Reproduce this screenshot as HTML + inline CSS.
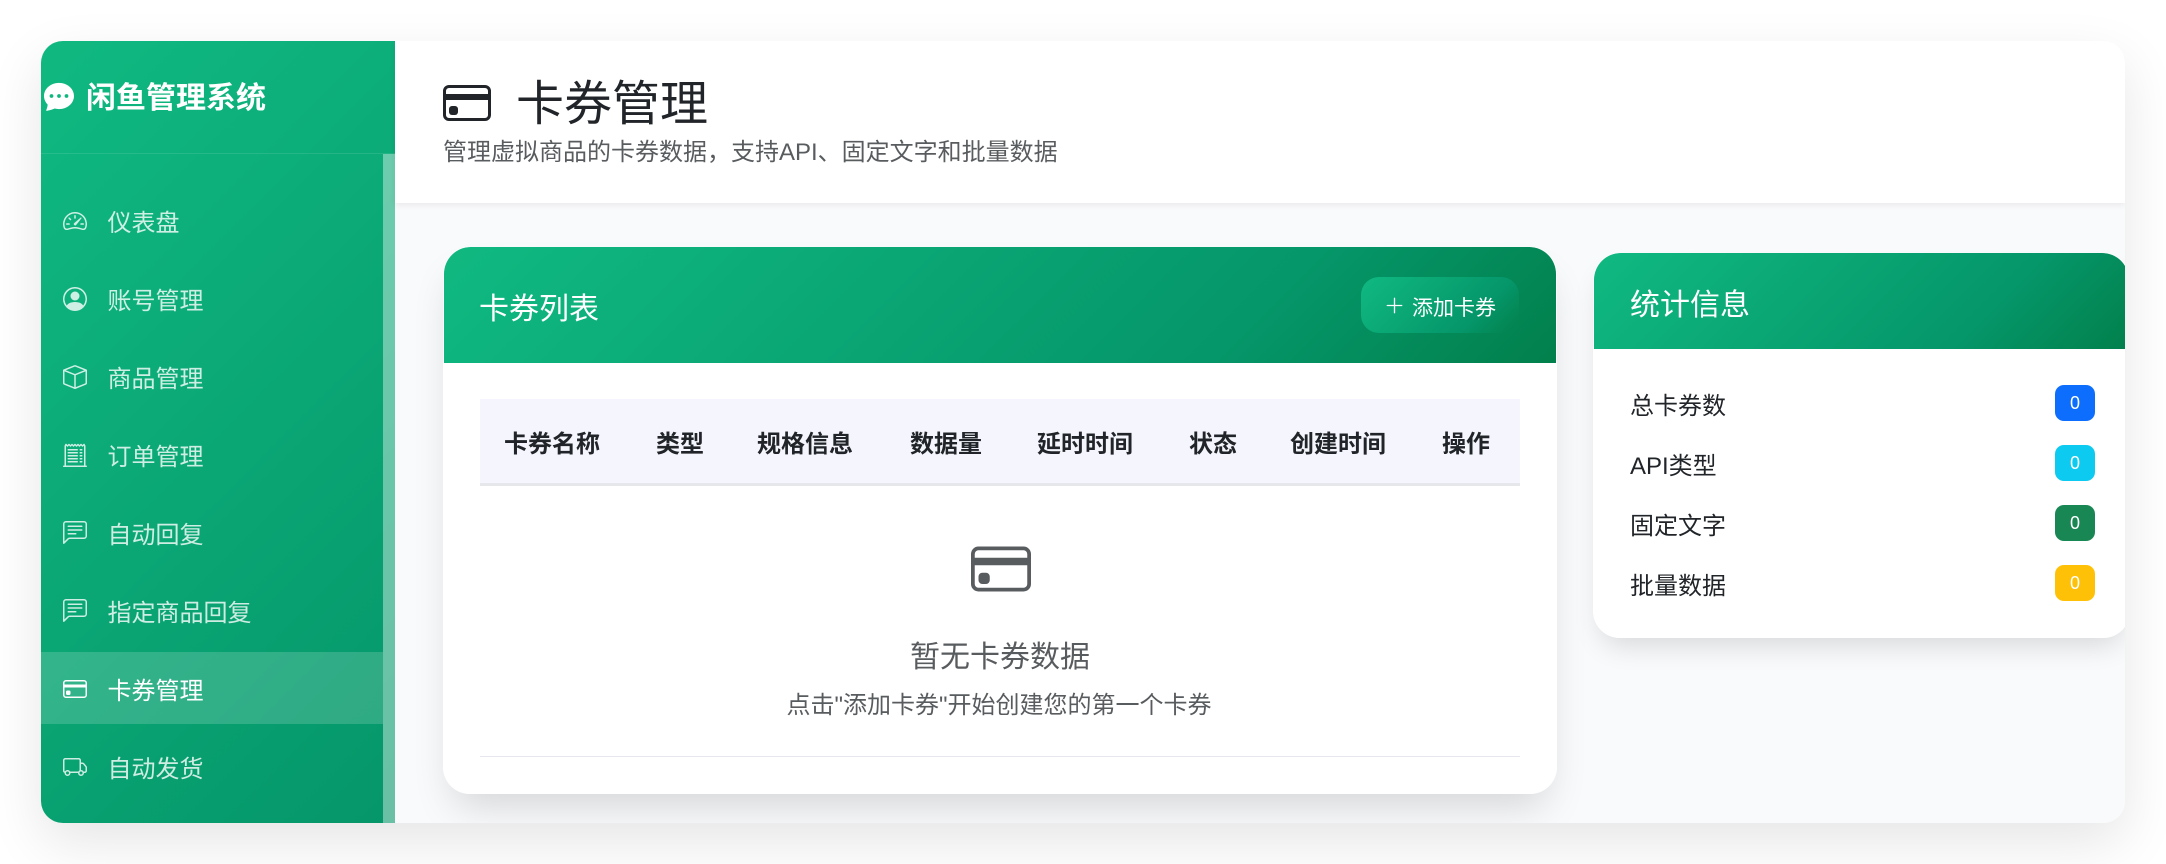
<!DOCTYPE html>
<html lang="zh-CN"><head><meta charset="utf-8"><title>卡券管理</title>
<style>
*{box-sizing:border-box}
html,body{margin:0;padding:0;width:2166px;height:864px;overflow:hidden;background:#fff;font-family:"Liberation Sans","Noto Sans CJK SC",sans-serif;color:#212529}
.abs,.t{position:absolute;white-space:nowrap}
.t{line-height:40px;height:40px}
svg{position:absolute;fill:currentColor;display:block}
#win{position:absolute;left:41px;top:41px;width:2084px;height:782px;border-radius:22px;box-shadow:0 20px 55px rgba(0,0,0,.1)}
#clip{position:absolute;inset:0;border-radius:22px;overflow:hidden;background:#f9fafc}
#side{position:absolute;left:0;top:0;width:354px;height:782px;background:linear-gradient(135deg,#10b981,#059669)}
#sh{position:absolute;left:0;top:0;width:354px;height:113px;border-bottom:1px solid rgba(255,255,255,.1)}
#strip{position:absolute;left:342px;top:113px;width:12px;height:669px;background:rgba(255,255,255,.4)}
#act{position:absolute;left:0;top:611px;width:342px;height:72px;background:rgba(255,255,255,.17)}
.m{color:rgba(255,255,255,.8);font-size:24px}
#mh{position:absolute;left:354px;top:0;width:1730px;height:162px;background:#fff;box-shadow:0 2px 6px rgba(0,0,0,.07)}
.card{position:absolute;background:#fff;border-radius:27px;overflow:hidden}
.shadow{position:absolute;border-radius:27px}
.head{position:absolute;left:1px;top:0;background:linear-gradient(135deg,#10b981 0%,#059669 72%,#02804c 100%);border-radius:27px 27px 0 0}
.th{font-weight:700;font-size:24px;color:#212529}
.badge{position:absolute;left:2014px;width:40px;height:36px;border-radius:9px;color:#fff;font-size:18px;line-height:37px;text-align:center}
.st{font-size:24px;color:#212529}
</style></head><body>
<div id="win"><div id="clip">
 <div id="side">
  <div id="sh"></div><div id="strip"></div><div id="act"></div>
  <svg style="left:3px;top:40px;color:#fff" width="30" height="30" viewBox="0 0 16 16"><path d="M16 8c0 3.866-3.582 7-8 7a9.06 9.06 0 0 1-2.347-.306c-.584.296-1.925.864-4.181 1.234-.2.032-.352-.176-.273-.362.354-.836.674-1.95.77-2.966C.744 11.37 0 9.76 0 8c0-3.866 3.582-7 8-7s8 3.134 8 7zM5 8a1 1 0 1 0-2 0 1 1 0 0 0 2 0zm4 0a1 1 0 1 0-2 0 1 1 0 0 0 2 0zm3 1a1 1 0 1 0 0-2 1 1 0 0 0 0 2z"/></svg>
  <div class="t" style="left:45px;top:38px;font-size:30px;font-weight:700;color:#fff;line-height:40px">闲鱼管理系统</div>

  <svg class="m" style="left:22px;top:168px" width="24" height="24" viewBox="0 0 16 16"><path d="M8 4a.5.5 0 0 1 .5.5V6a.5.5 0 0 1-1 0V4.5A.5.5 0 0 1 8 4zM3.732 5.732a.5.5 0 0 1 .707 0l.915.914a.5.5 0 1 1-.708.708l-.914-.915a.5.5 0 0 1 0-.707zM2 10a.5.5 0 0 1 .5-.5h1.586a.5.5 0 0 1 0 1H2.5A.5.5 0 0 1 2 10zm9.5 0a.5.5 0 0 1 .5-.5h1.5a.5.5 0 0 1 0 1H12a.5.5 0 0 1-.5-.5zm.754-4.246a.389.389 0 0 0-.527-.02L7.547 9.31a.91.91 0 1 0 1.302 1.258l3.434-4.297a.389.389 0 0 0-.029-.518z"/><path fill-rule="evenodd" d="M0 10a8 8 0 1 1 15.547 2.661c-.442 1.253-1.845 1.602-2.932 1.25C11.309 13.488 9.475 13 8 13c-1.474 0-3.31.488-4.615.911-1.087.352-2.49.003-2.932-1.25A7.988 7.988 0 0 1 0 10zm8-7a7 7 0 0 0-6.603 9.329c.203.575.923.876 1.68.63C4.397 12.533 6.358 12 8 12s3.604.532 4.923.96c.757.245 1.477-.056 1.68-.631A7 7 0 0 0 8 3z"/></svg>
  <div class="t m" style="left:66.5px;top:163px">仪表盘</div>

  <svg class="m" style="left:22px;top:246px" width="24" height="24" viewBox="0 0 16 16"><path d="M11 6a3 3 0 1 1-6 0 3 3 0 0 1 6 0z"/><path fill-rule="evenodd" d="M0 8a8 8 0 1 1 16 0A8 8 0 0 1 0 8zm8-7a7 7 0 0 0-5.468 11.37C3.242 11.226 4.805 10 8 10s4.757 1.225 5.468 2.37A7 7 0 0 0 8 1z"/></svg>
  <div class="t m" style="left:66.5px;top:241px">账号管理</div>

  <svg class="m" style="left:22px;top:324px" width="24" height="24" viewBox="0 0 16 16"><path d="M8.186 1.113a.5.5 0 0 0-.372 0L1.846 3.5 8 5.961 14.154 3.5 8.186 1.113zM15 4.239l-6.5 2.6v7.922l6.5-2.6V4.24zM7.5 14.762V6.838L1 4.239v7.925l6.5 2.6zM7.443.184a1.5 1.5 0 0 1 1.114 0l7.129 2.852A.5.5 0 0 1 16 3.5v8.662a1 1 0 0 1-.629.928l-7.185 2.874a.5.5 0 0 1-.372 0L.63 13.09a1 1 0 0 1-.63-.928V3.5a.5.5 0 0 1 .314-.464L7.443.184z"/></svg>
  <div class="t m" style="left:66.5px;top:319px">商品管理</div>

  <svg class="m" style="left:22px;top:402px" width="24" height="24" viewBox="0 0 16 16"><path d="M3 4.5a.5.5 0 0 1 .5-.5h6a.5.5 0 1 1 0 1h-6a.5.5 0 0 1-.5-.5zm0 2a.5.5 0 0 1 .5-.5h6a.5.5 0 1 1 0 1h-6a.5.5 0 0 1-.5-.5zm0 2a.5.5 0 0 1 .5-.5h6a.5.5 0 1 1 0 1h-6a.5.5 0 0 1-.5-.5zm0 2a.5.5 0 0 1 .5-.5h6a.5.5 0 0 1 0 1h-6a.5.5 0 0 1-.5-.5zm0 2a.5.5 0 0 1 .5-.5h6a.5.5 0 0 1 0 1h-6a.5.5 0 0 1-.5-.5zM11.5 4a.5.5 0 0 0 0 1h1a.5.5 0 0 0 0-1h-1zm0 2a.5.5 0 0 0 0 1h1a.5.5 0 0 0 0-1h-1zm0 2a.5.5 0 0 0 0 1h1a.5.5 0 0 0 0-1h-1zm0 2a.5.5 0 0 0 0 1h1a.5.5 0 0 0 0-1h-1zm0 2a.5.5 0 0 0 0 1h1a.5.5 0 0 0 0-1h-1z"/><path d="M2.354.646a.5.5 0 0 0-.801.13l-.5 1A.5.5 0 0 0 1 2v13H.5a.5.5 0 0 0 0 1h15a.5.5 0 0 0 0-1H15V2a.5.5 0 0 0-.053-.224l-.5-1a.5.5 0 0 0-.8-.13L13 1.293l-.646-.647a.5.5 0 0 0-.708 0L11 1.293l-.646-.647a.5.5 0 0 0-.708 0L9 1.293 8.354.646a.5.5 0 0 0-.708 0L7 1.293 6.354.646a.5.5 0 0 0-.708 0L5 1.293 4.354.646a.5.5 0 0 0-.708 0L3 1.293 2.354.646zm-.217 1.198.51.51a.5.5 0 0 0 .707 0L4 1.707l.646.647a.5.5 0 0 0 .708 0L6 1.707l.646.647a.5.5 0 0 0 .708 0L8 1.707l.646.647a.5.5 0 0 0 .708 0L10 1.707l.646.647a.5.5 0 0 0 .708 0L12 1.707l.646.647a.5.5 0 0 0 .708 0l.509-.51.137.274V15H2V2.118l.137-.274z"/></svg>
  <div class="t m" style="left:66.5px;top:397px">订单管理</div>

  <svg class="m" style="left:22px;top:480px" width="24" height="24" viewBox="0 0 16 16"><path d="M14 1a1 1 0 0 1 1 1v8a1 1 0 0 1-1 1H4.414A2 2 0 0 0 3 11.586l-2 2V2a1 1 0 0 1 1-1h12zM2 0a2 2 0 0 0-2 2v12.793a.5.5 0 0 0 .854.353l2.853-2.853A1 1 0 0 1 4.414 12H14a2 2 0 0 0 2-2V2a2 2 0 0 0-2-2H2z"/><path d="M3 3.5a.5.5 0 0 1 .5-.5h9a.5.5 0 0 1 0 1h-9a.5.5 0 0 1-.5-.5zM3 6a.5.5 0 0 1 .5-.5h9a.5.5 0 0 1 0 1h-9A.5.5 0 0 1 3 6zm0 2.5a.5.5 0 0 1 .5-.5h5a.5.5 0 0 1 0 1h-5a.5.5 0 0 1-.5-.5z"/></svg>
  <div class="t m" style="left:66.5px;top:475px">自动回复</div>

  <svg class="m" style="left:22px;top:558px" width="24" height="24" viewBox="0 0 16 16"><path d="M14 1a1 1 0 0 1 1 1v8a1 1 0 0 1-1 1H4.414A2 2 0 0 0 3 11.586l-2 2V2a1 1 0 0 1 1-1h12zM2 0a2 2 0 0 0-2 2v12.793a.5.5 0 0 0 .854.353l2.853-2.853A1 1 0 0 1 4.414 12H14a2 2 0 0 0 2-2V2a2 2 0 0 0-2-2H2z"/><path d="M3 3.5a.5.5 0 0 1 .5-.5h9a.5.5 0 0 1 0 1h-9a.5.5 0 0 1-.5-.5zM3 6a.5.5 0 0 1 .5-.5h9a.5.5 0 0 1 0 1h-9A.5.5 0 0 1 3 6zm0 2.5a.5.5 0 0 1 .5-.5h5a.5.5 0 0 1 0 1h-5a.5.5 0 0 1-.5-.5z"/></svg>
  <div class="t m" style="left:66.5px;top:553px">指定商品回复</div>

  <svg style="left:22px;top:636px;color:#fff" width="24" height="24" viewBox="0 0 16 16"><path d="M0 4a2 2 0 0 1 2-2h12a2 2 0 0 1 2 2v8a2 2 0 0 1-2 2H2a2 2 0 0 1-2-2V4zm2-1a1 1 0 0 0-1 1v1h14V4a1 1 0 0 0-1-1H2zm13 4H1v5a1 1 0 0 0 1 1h12a1 1 0 0 0 1-1V7z"/><path d="M2 10a1 1 0 0 1 1-1h1a1 1 0 0 1 1 1v1a1 1 0 0 1-1 1H3a1 1 0 0 1-1-1v-1z"/></svg>
  <div class="t" style="left:66.5px;top:631px;font-size:24px;color:#fff">卡券管理</div>

  <svg class="m" style="left:22px;top:714px" width="24" height="24" viewBox="0 0 16 16"><path d="M0 3.5A1.5 1.5 0 0 1 1.5 2h9A1.5 1.5 0 0 1 12 3.5V5h1.02a1.5 1.5 0 0 1 1.17.563l1.481 1.85a1.5 1.5 0 0 1 .329.938V10.5a1.5 1.5 0 0 1-1.5 1.5H14a2 2 0 1 1-4 0H5a2 2 0 1 1-3.998-.085A1.5 1.5 0 0 1 0 10.5v-7zm1.294 7.456A1.999 1.999 0 0 1 4.732 11h5.536a2.01 2.01 0 0 1 .732-.732V3.5a.5.5 0 0 0-.5-.5h-9a.5.5 0 0 0-.5.5v7a.5.5 0 0 0 .294.456zM12 10a2 2 0 0 1 1.732 1h.768a.5.5 0 0 0 .5-.5V8.35a.5.5 0 0 0-.11-.312l-1.48-1.85A.5.5 0 0 0 13.02 6H12v4zm-9 1a1 1 0 1 0 0 2 1 1 0 0 0 0-2zm9 0a1 1 0 1 0 0 2 1 1 0 0 0 0-2z"/></svg>
  <div class="t m" style="left:66.5px;top:709px">自动发货</div>
 </div>

 <div id="mh">
  <svg style="left:48px;top:38px;color:#212529" width="48" height="48" viewBox="0 0 16 16"><path d="M0 4a2 2 0 0 1 2-2h12a2 2 0 0 1 2 2v8a2 2 0 0 1-2 2H2a2 2 0 0 1-2-2V4zm2-1a1 1 0 0 0-1 1v1h14V4a1 1 0 0 0-1-1H2zm13 4H1v5a1 1 0 0 0 1 1h12a1 1 0 0 0 1-1V7z"/><path d="M2 10a1 1 0 0 1 1-1h1a1 1 0 0 1 1 1v1a1 1 0 0 1-1 1H3a1 1 0 0 1-1-1v-1z"/></svg>
  <div class="abs" style="left:121px;top:34px;font-size:48px;line-height:60px;color:#212529">卡券管理</div>
  <div class="abs" style="left:48px;top:92px;font-size:24px;line-height:40px;color:rgba(33,37,41,.75)">管理虚拟商品的卡券数据，支持API、固定文字和批量数据</div>
 </div>

 <div class="shadow" style="left:402px;top:206px;width:1114px;height:547px;box-shadow:0 22px 40px -10px rgba(0,0,0,.15)"></div>
 <div class="card" style="left:402px;top:206px;width:1114px;height:547px">
  <div class="head" style="width:1112px;height:116px"></div>
  <div class="t" style="left:36px;top:43px;font-size:30px;color:#fff">卡券列表</div>
  <div class="abs" style="left:918px;top:30px;width:158px;height:56px;border-radius:18px;background:linear-gradient(135deg,#10b981 0%,#059669 72%,#02804c 100%)"></div>
  <svg style="left:941px;top:48px;color:#fff" width="21" height="21" viewBox="0 0 16 16"><path d="M8 2a.5.5 0 0 1 .5.5v5h5a.5.5 0 0 1 0 1h-5v5a.5.5 0 0 1-1 0v-5h-5a.5.5 0 0 1 0-1h5v-5A.5.5 0 0 1 8 2Z"/></svg>
  <div class="t" style="left:969px;top:42px;font-size:21px;color:#fff">添加卡券</div>

  <div class="abs" style="left:37px;top:152px;width:1040px;height:87px;background:#f5f6fd;border-bottom:3px solid #e5e7eb"></div>
  <div class="t th" style="left:61px;top:178px">卡券名称</div>
  <div class="t th" style="left:213px;top:178px">类型</div>
  <div class="t th" style="left:314px;top:178px">规格信息</div>
  <div class="t th" style="left:467px;top:178px">数据量</div>
  <div class="t th" style="left:594px;top:178px">延时时间</div>
  <div class="t th" style="left:746px;top:178px">状态</div>
  <div class="t th" style="left:847px;top:178px">创建时间</div>
  <div class="t th" style="left:999px;top:178px">操作</div>

  <svg style="left:527.5px;top:292px;color:#595c5f" width="60" height="60" viewBox="0 0 16 16"><path d="M0 4a2 2 0 0 1 2-2h12a2 2 0 0 1 2 2v8a2 2 0 0 1-2 2H2a2 2 0 0 1-2-2V4zm2-1a1 1 0 0 0-1 1v1h14V4a1 1 0 0 0-1-1H2zm13 4H1v5a1 1 0 0 0 1 1h12a1 1 0 0 0 1-1V7z"/><path d="M2 10a1 1 0 0 1 1-1h1a1 1 0 0 1 1 1v1a1 1 0 0 1-1 1H3a1 1 0 0 1-1-1v-1z"/></svg>
  <div class="t" style="left:37px;width:1040px;text-align:center;top:391px;font-size:30px;color:#595c5f">暂无卡券数据</div>
  <div class="t" style="left:36px;width:1040px;text-align:center;top:439px;font-size:24px;color:#595c5f">点击"添加卡券"开始创建您的第一个卡券</div>
  <div class="abs" style="left:37px;top:509px;width:1040px;height:1px;background:#e6e7ec"></div>
 </div>

 <div class="shadow" style="left:1552px;top:212px;width:537px;height:385px;box-shadow:0 15px 28px -8px rgba(0,0,0,.14)"></div>
 <div class="card" style="left:1552px;top:212px;width:537px;height:385px">
  <div class="head" style="width:535px;height:96px"></div>
  <div class="t" style="left:37px;top:33px;font-size:30px;color:#fff">统计信息</div>
  <div class="t st" style="left:37px;top:134px">总卡券数</div>
  <div class="t st" style="left:37px;top:194px">API类型</div>
  <div class="t st" style="left:37px;top:254px">固定文字</div>
  <div class="t st" style="left:37px;top:314px">批量数据</div>
 </div>
 <div class="badge" style="top:344px;background:#0d6efd">0</div>
 <div class="badge" style="top:404px;background:#0dcaf0">0</div>
 <div class="badge" style="top:464px;background:#198754">0</div>
 <div class="badge" style="top:524px;background:#ffc107">0</div>
</div></div>
</body></html>
